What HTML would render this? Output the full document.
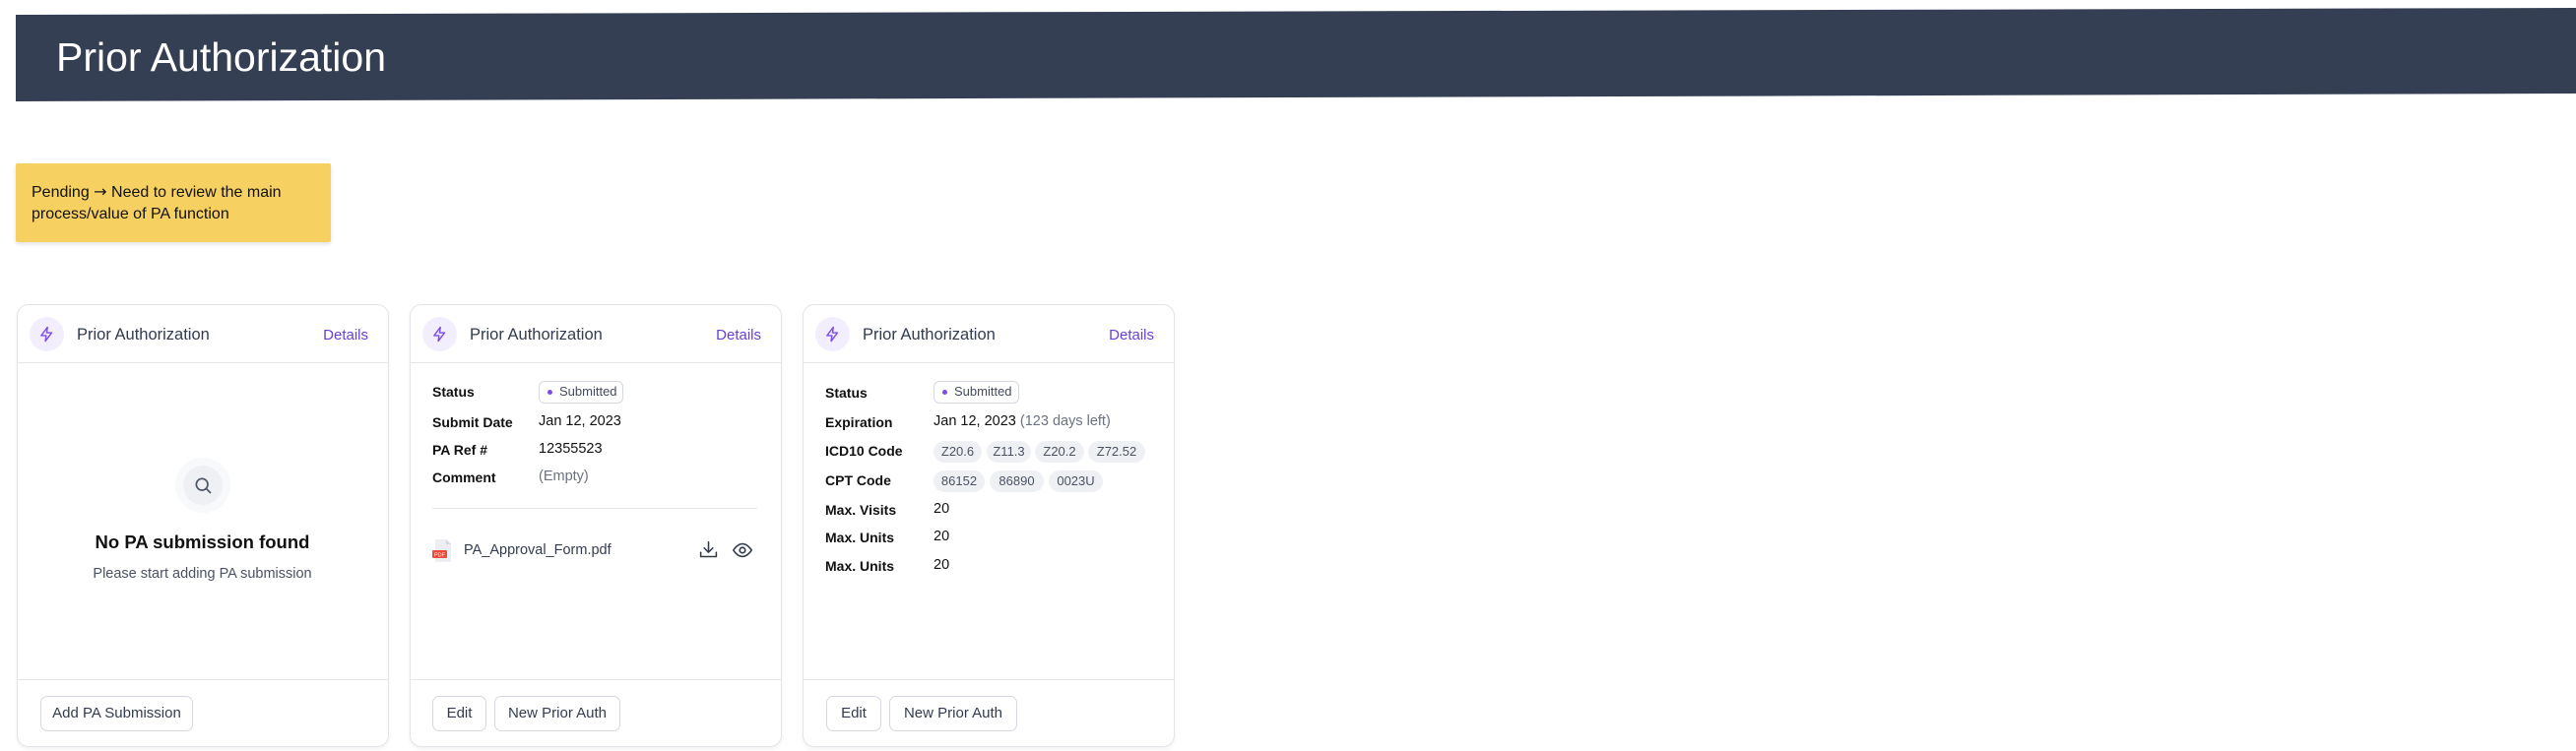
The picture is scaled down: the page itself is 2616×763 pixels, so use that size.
<!DOCTYPE html>
<html><head><meta charset="utf-8"><style>
*{margin:0;padding:0;box-sizing:border-box}
body{width:2616px;height:763px;background:#fff;font-family:"Liberation Sans",sans-serif;position:relative;overflow:hidden;color:#111827}
.a{position:absolute;white-space:nowrap}
.card{position:absolute;top:309px;width:378px;height:450px;border:1.5px solid #e3e5ea;border-radius:12px;background:#fff;box-shadow:0 2px 4px rgba(0,0,0,.06)}
.hd{position:absolute;left:0;right:0;top:0;height:59px;border-bottom:1.5px solid #e5e7eb}
.ic{position:absolute;left:12px;top:12px;width:35px;height:35px;border-radius:50%;background:#f3eefe}
.ic svg{position:absolute;left:9px;top:8px}
.tt{position:absolute;left:60px;top:21px;font-size:16.5px;color:#333c4e}
.dt{position:absolute;right:20px;top:22px;font-size:15px;color:#6a3fd6}
.ft{position:absolute;left:0;right:0;top:380px;border-top:1.5px solid #e5e7eb}
.btn{position:absolute;top:397px;height:36px;border:1.5px solid #d5d8e0;border-radius:7px;font-size:15px;color:#333c4e;text-align:center;line-height:34px}
.lb{position:absolute;left:22px;font-size:14px;color:#111;font-weight:bold}
.vl{position:absolute;font-size:14.5px;color:#111}
.badge{position:absolute;height:23px;border:1.5px solid #d5d8e0;border-radius:6px;font-size:13px;color:#444b5c;line-height:20px;padding-left:20px}
.badge:before{content:"";position:absolute;left:8px;top:8px;width:5px;height:5px;border-radius:50%;background:#7c4de6}
.chip{position:absolute;height:22px;border-radius:11px;background:#eef0f4;font-size:13px;color:#4b5262;line-height:22px;text-align:center}
</style></head><body>
<svg class="a" style="left:0;top:0" width="2616" height="110"><polygon points="16,15 2616,8 2616,95 16,103" fill="#353f53"/></svg>
<div class="a" style="left:57px;top:35px;font-size:41px;color:#fff">Prior Authorization</div>
<div class="a" style="left:16px;top:166px;width:320px;height:80px;background:#f6d060;border-radius:2px;box-shadow:0 2px 4px rgba(0,0,0,.12)"></div>
<div class="a" style="left:32px;top:184px;font-size:16px;line-height:22px;color:#111">Pending <span style="font-family:'DejaVu Sans'">→</span> Need to review the main<br>process/value of PA function</div>

<div class="card" style="left:17px">
 <div class="hd"><div class="ic"><svg width="17" height="19" viewBox="0 0 24 24" fill="none" stroke="#7c4de6" stroke-width="2" stroke-linejoin="round"><path d="M13 2L4 14h7l-1 8 9-12h-7z"/></svg></div><div class="tt">Prior Authorization</div><div class="dt">Details</div></div>
 <div class="a" style="left:160px;top:155px;width:56px;height:56px;border-radius:50%;background:#f8f9fb"></div>
 <div class="a" style="left:168px;top:163px;width:40px;height:40px;border-radius:50%;background:#eef0f4"></div>
 <svg class="a" style="left:178px;top:173px" width="20" height="20" viewBox="0 0 24 24" fill="none" stroke="#4b5262" stroke-width="2" stroke-linecap="round"><circle cx="11" cy="11" r="7"/><path d="M16 16l5 5"/></svg>
 <div class="a" style="left:0;width:375px;text-align:center;top:230px;font-size:18.5px;color:#111;font-weight:bold">No PA submission found</div>
 <div class="a" style="left:0;width:375px;text-align:center;top:265px;font-size:14.5px;color:#4b5262">Please start adding PA submission</div>
 <div class="ft"></div>
 <div class="btn" style="left:23px;width:155px">Add PA Submission</div>
</div>

<div class="card" style="left:416px">
 <div class="hd"><div class="ic"><svg width="17" height="19" viewBox="0 0 24 24" fill="none" stroke="#7c4de6" stroke-width="2" stroke-linejoin="round"><path d="M13 2L4 14h7l-1 8 9-12h-7z"/></svg></div><div class="tt">Prior Authorization</div><div class="dt">Details</div></div>
 <div class="lb" style="top:80px">Status</div><div class="badge" style="left:130px;top:77px;width:86px">Submitted</div>
 <div class="lb" style="top:111px">Submit Date</div><div class="vl" style="left:130px;top:110px">Jan 12, 2023</div>
 <div class="lb" style="top:139px">PA Ref #</div><div class="vl" style="left:130px;top:138px">12355523</div>
 <div class="lb" style="top:167px">Comment</div><div class="vl" style="left:130px;top:166px;color:#6b7280">(Empty)</div>
 <div class="a" style="left:22px;top:206px;width:330px;border-top:1.5px solid #e5e7eb"></div>
 <svg class="a" style="left:22px;top:237px" width="22" height="25" viewBox="0 0 22 25"><path d="M3 1h11l5 5v18H3z" fill="#eceef2"/><path d="M14 1v5h5" fill="#d5d8de"/><rect x="0" y="12" width="15" height="8" rx="1" fill="#e74c3c"/><text x="7.5" y="18.3" font-size="5.5" fill="#fff" text-anchor="middle" font-family="Liberation Sans">PDF</text></svg>
 <div class="vl" style="left:54px;top:241px;color:#333c4e">PA_Approval_Form.pdf</div>
 <svg class="a" style="left:292px;top:238px" width="21" height="21" viewBox="0 0 24 24" fill="none" stroke="#333c4e" stroke-width="1.8" stroke-linecap="round" stroke-linejoin="round"><path d="M12 3v12M7 10l5 5 5-5M3 15v5h18v-5"/></svg>
 <svg class="a" style="left:326px;top:238px" width="22" height="22" viewBox="0 0 24 24" fill="none" stroke="#333c4e" stroke-width="1.8"><path d="M2 12s4-7 10-7 10 7 10 7-4 7-10 7S2 12 2 12z"/><circle cx="12" cy="12" r="3"/></svg>
 <div class="ft"></div>
 <div class="btn" style="left:22px;width:55px">Edit</div>
 <div class="btn" style="left:85px;width:128px">New Prior Auth</div>
</div>

<div class="card" style="left:815px">
 <div class="hd"><div class="ic"><svg width="17" height="19" viewBox="0 0 24 24" fill="none" stroke="#7c4de6" stroke-width="2" stroke-linejoin="round"><path d="M13 2L4 14h7l-1 8 9-12h-7z"/></svg></div><div class="tt">Prior Authorization</div><div class="dt">Details</div></div>
 <div class="lb" style="top:81px">Status</div><div class="badge" style="left:132px;top:77px;width:87px">Submitted</div>
 <div class="lb" style="top:111px">Expiration</div><div class="vl" style="left:132px;top:110px">Jan 12, 2023 <span style="color:#6b7280">(123 days left)</span></div>
 <div class="lb" style="top:140px">ICD10 Code</div>
 <div class="chip" style="left:132px;top:138px;width:49px">Z20.6</div>
 <div class="chip" style="left:186px;top:138px;width:45px">Z11.3</div>
 <div class="chip" style="left:235px;top:138px;width:50px">Z20.2</div>
 <div class="chip" style="left:289px;top:138px;width:58px">Z72.52</div>
 <div class="lb" style="top:170px">CPT Code</div>
 <div class="chip" style="left:132px;top:168px;width:52px">86152</div>
 <div class="chip" style="left:189px;top:168px;width:55px">86890</div>
 <div class="chip" style="left:249px;top:168px;width:55px">0023U</div>
 <div class="lb" style="top:200px">Max. Visits</div><div class="vl" style="left:132px;top:199px">20</div>
 <div class="lb" style="top:228px">Max. Units</div><div class="vl" style="left:132px;top:227px">20</div>
 <div class="lb" style="top:257px">Max. Units</div><div class="vl" style="left:132px;top:256px">20</div>
 <div class="ft"></div>
 <div class="btn" style="left:23px;width:56px">Edit</div>
 <div class="btn" style="left:87px;width:130px">New Prior Auth</div>
</div>
</body></html>
